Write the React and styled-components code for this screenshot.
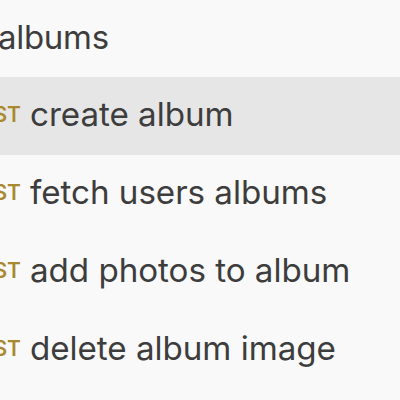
import React from "react";
import styled, { createGlobalStyle } from "styled-components";

const Global = createGlobalStyle`
  html, body { margin: 0; padding: 0; background: #f9f9f9; }
  body { font-family: Inter, "Noto Sans", sans-serif; }
`;

const Viewport = styled.div`
  width: 400px;
  height: 400px;
  overflow: hidden;
  background: #f9f9f9;
`;

const List = styled.div`
  display: flex;
  flex-direction: column;
  margin-left: -60px;
  width: 460px;
`;

const FolderRow = styled.div`
  height: 77px;
  box-sizing: border-box;
  padding-bottom: 4px;
  display: flex;
  align-items: center;
  padding-left: 58px;
  font-size: 33px;
  letter-spacing: -0.3px;
  color: #3d3d3d;
`;

const Row = styled.div`
  height: 78px;
  box-sizing: border-box;
  padding-bottom: 4px;
  display: flex;
  align-items: center;
  gap: 9px;
  background: ${(p) => (p.$active ? "#e6e6e6" : "transparent")};
`;

const Method = styled.span`
  width: 81px;
  text-align: right;
  font-size: 21px;
  font-weight: 600;
  color: #a9892f;
`;

const Name = styled.span`
  font-size: 33.2px;
  letter-spacing: -0.05px;
  color: #3d3d3d;
  white-space: nowrap;
`;

const items = [
  { name: "create album", active: true },
  { name: "fetch users albums" },
  { name: "add photos to album" },
  { name: "delete album image" },
];

export default function App() {
  return (
    <Viewport>
      <Global />
      <List>
        <FolderRow>albums</FolderRow>
        {items.map((it) => (
          <Row key={it.name} $active={it.active}>
            <Method>POST</Method>
            <Name>{it.name}</Name>
          </Row>
        ))}
      </List>
    </Viewport>
  );
}
